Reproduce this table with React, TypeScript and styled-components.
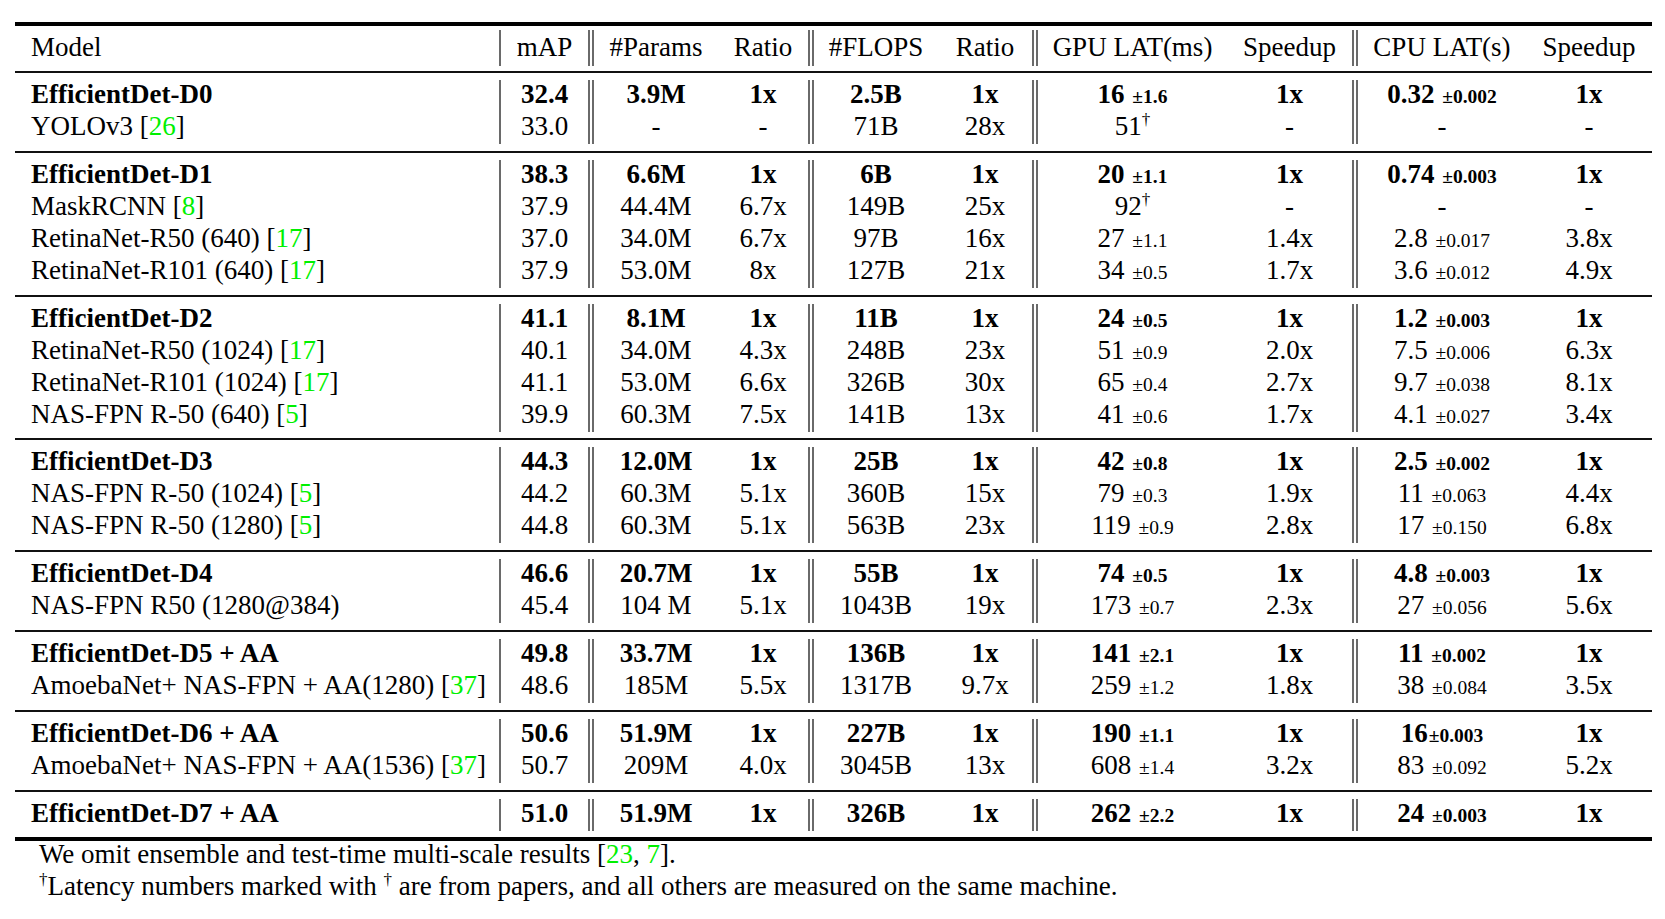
import React from 'react';
import styled, { createGlobalStyle } from 'styled-components';

type Rule = 'single' | 'double' | 'none';

const COLUMNS = '486px 93px 124px 96px 124px 100px 189px 131px 168px 126px';
const RULES: Rule[] = ['single', 'double', 'none', 'double', 'none', 'double', 'none', 'double', 'none', 'none'];

const HEADER = ['Model', 'mAP', '#Params', 'Ratio', '#FLOPS', 'Ratio', 'GPU LAT(ms)', 'Speedup', 'CPU LAT(s)', 'Speedup'];

// first row of every group is the EfficientDet one, printed in bold
const GROUPS: string[][][] = [
    [
        ['EfficientDet-D0', '32.4', '3.9M', '1x', '2.5B', '1x', '16 ±1.6', '1x', '0.32 ±0.002', '1x'],
        ['YOLOv3 [26]', '33.0', '-', '-', '71B', '28x', '51†', '-', '-', '-'],
    ],
    [
        ['EfficientDet-D1', '38.3', '6.6M', '1x', '6B', '1x', '20 ±1.1', '1x', '0.74 ±0.003', '1x'],
        ['MaskRCNN [8]', '37.9', '44.4M', '6.7x', '149B', '25x', '92†', '-', '-', '-'],
        ['RetinaNet-R50 (640) [17]', '37.0', '34.0M', '6.7x', '97B', '16x', '27 ±1.1', '1.4x', '2.8 ±0.017', '3.8x'],
        ['RetinaNet-R101 (640) [17]', '37.9', '53.0M', '8x', '127B', '21x', '34 ±0.5', '1.7x', '3.6 ±0.012', '4.9x'],
    ],
    [
        ['EfficientDet-D2', '41.1', '8.1M', '1x', '11B', '1x', '24 ±0.5', '1x', '1.2 ±0.003', '1x'],
        ['RetinaNet-R50 (1024) [17]', '40.1', '34.0M', '4.3x', '248B', '23x', '51 ±0.9', '2.0x', '7.5 ±0.006', '6.3x'],
        ['RetinaNet-R101 (1024) [17]', '41.1', '53.0M', '6.6x', '326B', '30x', '65 ±0.4', '2.7x', '9.7 ±0.038', '8.1x'],
        ['NAS-FPN R-50 (640) [5]', '39.9', '60.3M', '7.5x', '141B', '13x', '41 ±0.6', '1.7x', '4.1 ±0.027', '3.4x'],
    ],
    [
        ['EfficientDet-D3', '44.3', '12.0M', '1x', '25B', '1x', '42 ±0.8', '1x', '2.5 ±0.002', '1x'],
        ['NAS-FPN R-50 (1024) [5]', '44.2', '60.3M', '5.1x', '360B', '15x', '79 ±0.3', '1.9x', '11 ±0.063', '4.4x'],
        ['NAS-FPN R-50 (1280) [5]', '44.8', '60.3M', '5.1x', '563B', '23x', '119 ±0.9', '2.8x', '17 ±0.150', '6.8x'],
    ],
    [
        ['EfficientDet-D4', '46.6', '20.7M', '1x', '55B', '1x', '74 ±0.5', '1x', '4.8 ±0.003', '1x'],
        ['NAS-FPN R50 (1280@384)', '45.4', '104 M', '5.1x', '1043B', '19x', '173 ±0.7', '2.3x', '27 ±0.056', '5.6x'],
    ],
    [
        ['EfficientDet-D5 + AA', '49.8', '33.7M', '1x', '136B', '1x', '141 ±2.1', '1x', '11 ±0.002', '1x'],
        ['AmoebaNet+ NAS-FPN + AA(1280) [37]', '48.6', '185M', '5.5x', '1317B', '9.7x', '259 ±1.2', '1.8x', '38 ±0.084', '3.5x'],
    ],
    [
        ['EfficientDet-D6 + AA', '50.6', '51.9M', '1x', '227B', '1x', '190 ±1.1', '1x', '16±0.003', '1x'],
        ['AmoebaNet+ NAS-FPN + AA(1536) [37]', '50.7', '209M', '4.0x', '3045B', '13x', '608 ±1.4', '3.2x', '83 ±0.092', '5.2x'],
    ],
    [
        ['EfficientDet-D7 + AA', '51.0', '51.9M', '1x', '326B', '1x', '262 ±2.2', '1x', '24 ±0.003', '1x'],
    ],
];

const GlobalStyle = createGlobalStyle`
  html, body {
    margin: 0;
    padding: 0;
    background: #ffffff;
  }
  body {
    font-family: "Liberation Serif", "Times New Roman", serif;
    color: #000000;
  }
`;

function CellText({ text }: { text: string }) {
    const cite = text.match(/^(.*)\[(.+)\]$/);
    if (cite) {
        return (
            <>
                {cite[1]}[<Cite>{cite[2]}</Cite>]
            </>
        );
    }
    if (text.includes('±')) {
        const [main, pm] = text.split('±');
        return (
            <>
                {main}
                <Pm>±{pm}</Pm>
            </>
        );
    }
    if (text.endsWith('†')) {
        return (
            <>
                {text.slice(0, -1)}
                <Dagger>†</Dagger>
            </>
        );
    }
    return <>{text}</>;
}

function TableRow({ cells, bold, header }: { cells: string[]; bold?: boolean; header?: boolean }) {
    return (
        <Row $header={header}>
            {cells.map((c, i) => (
                <Cell key={i} $rule={RULES[i]} $left={i === 0} $bold={bold}>
                    <CellText text={c} />
                </Cell>
            ))}
        </Row>
    );
}

export default function App() {
    return (
        <Page>
            <GlobalStyle />
            <Table>
                <Head>
                    <TableRow cells={HEADER} header />
                </Head>
                {GROUPS.map((rows, g) => (
                    <Group key={g}>
                        {rows.map((r, i) => (
                            <TableRow key={i} cells={r} bold={i === 0} />
                        ))}
                    </Group>
                ))}
            </Table>
            <Notes>
                <Note>
                    We omit ensemble and test-time multi-scale results [<Cite>23</Cite>, <Cite>7</Cite>].
                </Note>
                <Note>
                    <Dagger>†</Dagger>Latency numbers marked with <Dagger>†</Dagger> are from papers, and all others
                    are measured on the same machine.
                </Note>
            </Notes>
        </Page>
    );
}

interface CellProps {
    $rule: Rule;
    $left?: boolean;
    $bold?: boolean;
}

const Page = styled.div`
  width: 1665px;
  height: 919px;
  padding: 22px 13px 0 15px;
  box-sizing: border-box;
  overflow: hidden;
`;
const Table = styled.div`
  width: 1637px;
  border-top: 4px solid #000;
  border-bottom: 4px solid #000;
`;
const Head = styled.div`
  padding: 4px 0 5px;
`;
const Group = styled.div`
  border-top: 2px solid #111;
  padding: 7px 0 6.8px;
`;
const Row = styled.div<{ $header?: boolean }>`
  display: grid;
  grid-template-columns: ${COLUMNS};
  height: ${(p) => (p.$header ? 36 : 32)}px;
  font-size: 27px;
  line-height: ${(p) => (p.$header ? 34 : 29)}px;
`;
const Cell = styled.div<CellProps>`
  box-sizing: border-box;
  white-space: nowrap;
  text-align: ${(p) => (p.$left ? 'left' : 'center')};
  padding-left: ${(p) => (p.$left ? 16 : 0)}px;
  font-weight: ${(p) => (p.$bold ? 700 : 400)};
  border-right: ${(p) =>
        p.$rule === 'single' ? '2px solid #6a6a6a' : p.$rule === 'double' ? '6px double #6a6a6a' : 'none'};
`;
const Cite = styled.span`
  color: #00f000;
`;
const Pm = styled.span`
  font-size: 19.5px;
  margin-left: 1px;
`;
const Dagger = styled.span`
  font-size: 17px;
  vertical-align: 10px;
  line-height: 0;
`;
const Notes = styled.div`
  margin-top: -2px;
  padding-left: 24px;
  font-size: 27px;
  line-height: 31.5px;
`;
const Note = styled.div`
  white-space: nowrap;
`;
